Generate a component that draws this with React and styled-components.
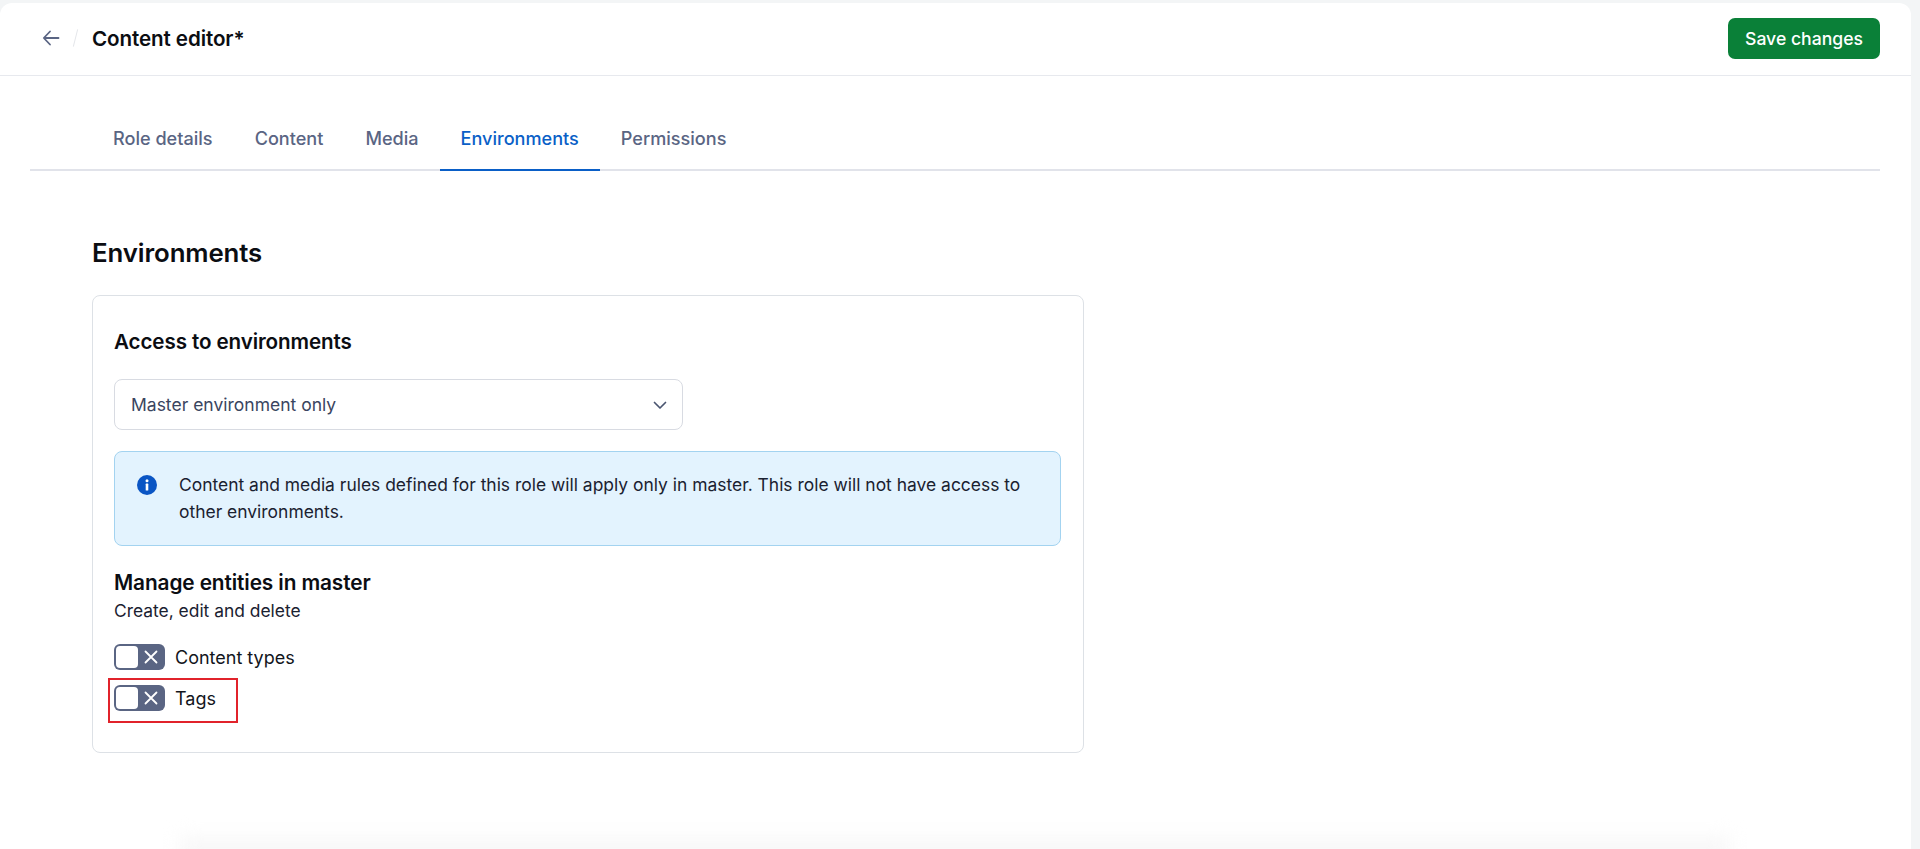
import React from 'react';
import styled, { createGlobalStyle } from 'styled-components';

const Global = createGlobalStyle`
  html, body { margin: 0; height: 100%; background: #f3f5f6; }
  body { font-family: Inter, "Liberation Sans", sans-serif; color: #0b0d12; overflow: hidden; }
  #root { height: 100%; }
`;
const Page = styled.div`
  height: 849px; box-sizing: border-box; padding: 3px 9px 0 0; position: relative; overflow: hidden;
`;
const Panel = styled.main`
  height: 846px; background: #fff; border-radius: 12px 12px 0 0;
`;
const Header = styled.header`
  height: 73px; box-sizing: border-box; border-bottom: 1px solid #e7e9ee;
  display: flex; align-items: center; padding: 0 31px 2px 40px;
`;
const BackButton = styled.button`
  border: 0; background: none; padding: 0; width: 22px; height: 22px; display: flex; align-items: center; justify-content: center; color: #5a6583;
`;
const Slash = styled.span`
  width: 1px; height: 18px; background: #e4e6ea; transform: rotate(14deg); margin: 0 16px 0 13px;
`;
const Title = styled.h1`
  margin: 0; font-size: 20.6px; font-weight: 600; color: #0b0d12; flex: 1; letter-spacing: -0.1px;
`;
const SaveButton = styled.button`
  width: 152px; height: 41px; border: 0; border-radius: 7px; background: #0a8038; color: #fff;
  font: 500 17.6px Inter, sans-serif; padding: 0;
`;
const Tabs = styled.nav`
  margin: 33px 31px 0 30px; height: 60px; border-bottom: 2px solid #e1e3ea; display: flex; padding-left: 62px; box-sizing: content-box;
`;
const Tab = styled.a`
  box-sizing: border-box; height: 62px; padding: 0 21px 2px; display: flex; align-items: center; font-size: 18.1px; font-weight: 500;
  color: ${p => (p.$active ? '#0a5fc7' : '#5a6583')};
  border-bottom: 2px solid ${p => (p.$active ? '#0a5fc7' : 'transparent')};
`;
const Content = styled.section`
  padding: 67px 0 0 92px;
`;
const PageHeading = styled.h2`
  margin: 0 0 27px; font-size: 25.8px; line-height: 30px; font-weight: 600; color: #0b0d12; letter-spacing: -0.1px;
`;
const Card = styled.div`
  width: 992px; height: 458px; box-sizing: border-box; border: 1.5px solid #dde1e6; border-radius: 8px; padding: 33px 21px 0;
`;
const CardTitle = styled.h3`
  margin: 0; font-size: 20.6px; line-height: 26px; font-weight: 600; color: #0b0d12; letter-spacing: -0.1px;
`;
const Select = styled.div`
  margin-top: 24px; width: 569px; height: 51px; box-sizing: border-box; border: 1.5px solid #d8dbe2; border-radius: 8px;
  display: flex; align-items: center; justify-content: space-between; padding: 0 13px 0 16px;
  font-size: 17.5px; color: #3a4560;
`;
const Alert = styled.div`
  margin-top: 21px; width: 947px; height: 95px; box-sizing: border-box; background: #e3f3fe; border: 1.5px solid #a3d3f0; border-radius: 8px;
  display: flex; padding: 20px 24px 0 22px; gap: 22px; font-size: 17.45px; line-height: 26.5px; color: #1a2130;
`;
const AlertIcon = styled.svg`
  width: 20px; height: 20px; flex: none; margin-top: 3px;
`;
const SectionTitle = styled(CardTitle)`
  margin-top: 24px;
  font-size: 20.8px;
`;
const Sub = styled.p`
  margin: 2px 0 20px; font-size: 17.4px; line-height: 26px; color: #1a2130;
`;
const ToggleRow = styled.label`
  display: flex; align-items: center; gap: 10px; height: 26px; margin-bottom: 15px; font-size: 18px; color: #12151c; position: relative;
`;
const Toggle = styled.span`
  width: 51px; height: 26px; box-sizing: border-box; border-radius: 6px; background: #5a6583; position: relative; display: flex; align-items: center; justify-content: flex-end; padding-right: 6px; color: #fff;
`;
const Knob = styled.span`
  position: absolute; left: 2px; top: 2px; width: 22px; height: 22px; border-radius: 4px; background: #fff;
`;
const Highlight = styled.span`
  position: absolute; left: -6px; top: -7px; width: 130px; height: 45px; box-sizing: border-box; border: 2px solid #e1232b; pointer-events: none;
`;
const BottomShade = styled.div`
  position: absolute; left: 180px; right: 190px; bottom: -12px; height: 22px; background: #f6f6f6; filter: blur(10px); pointer-events: none;
`;

const Cross = () => (
  <svg width="16" height="16" viewBox="0 0 16 16" fill="none" stroke="currentColor" strokeWidth="1.8" strokeLinecap="round">
    <path d="M2.5 2.5l11 11M13.5 2.5l-11 11" />
  </svg>
);

export default function App() {
  return (
    <Page>
      <Global />
      <Panel>
        <Header>
          <BackButton aria-label="Back">
            <svg width="20" height="20" viewBox="0 0 20 20" fill="none" stroke="currentColor" strokeWidth="1.8" strokeLinecap="round" strokeLinejoin="round">
              <path d="M17.5 10H3M9 3.5L2.8 10 9 16.5" />
            </svg>
          </BackButton>
          <Slash />
          <Title>Content editor*</Title>
          <SaveButton>Save changes</SaveButton>
        </Header>
        <Tabs>
          <Tab>Role details</Tab>
          <Tab>Content</Tab>
          <Tab>Media</Tab>
          <Tab $active>Environments</Tab>
          <Tab>Permissions</Tab>
        </Tabs>
        <Content>
          <PageHeading>Environments</PageHeading>
          <Card>
            <CardTitle>Access to environments</CardTitle>
            <Select>
              Master environment only
              <svg width="18" height="18" viewBox="0 0 18 18" fill="none" stroke="#4a5570" strokeWidth="1.7" strokeLinecap="round" strokeLinejoin="round">
                <path d="M3.5 6.5L9 12l5.5-5.5" />
              </svg>
            </Select>
            <Alert>
              <AlertIcon viewBox="0 0 20 20">
                <circle cx="10" cy="10" r="10" fill="#0a55c4" />
                <circle cx="10" cy="5.8" r="1.5" fill="#fff" />
                <rect x="8.7" y="8.6" width="2.6" height="7" rx="0.6" fill="#fff" />
              </AlertIcon>
              <div>Content and media rules defined for this role will apply only in master. This role will not have access to other environments.</div>
            </Alert>
            <SectionTitle>Manage entities in master</SectionTitle>
            <Sub>Create, edit and delete</Sub>
            <ToggleRow>
              <Toggle><Knob /><Cross /></Toggle>
              Content types
            </ToggleRow>
            <ToggleRow>
              <Highlight />
              <Toggle><Knob /><Cross /></Toggle>
              Tags
            </ToggleRow>
          </Card>
        </Content>
      </Panel>
      <BottomShade />
    </Page>
  );
}
